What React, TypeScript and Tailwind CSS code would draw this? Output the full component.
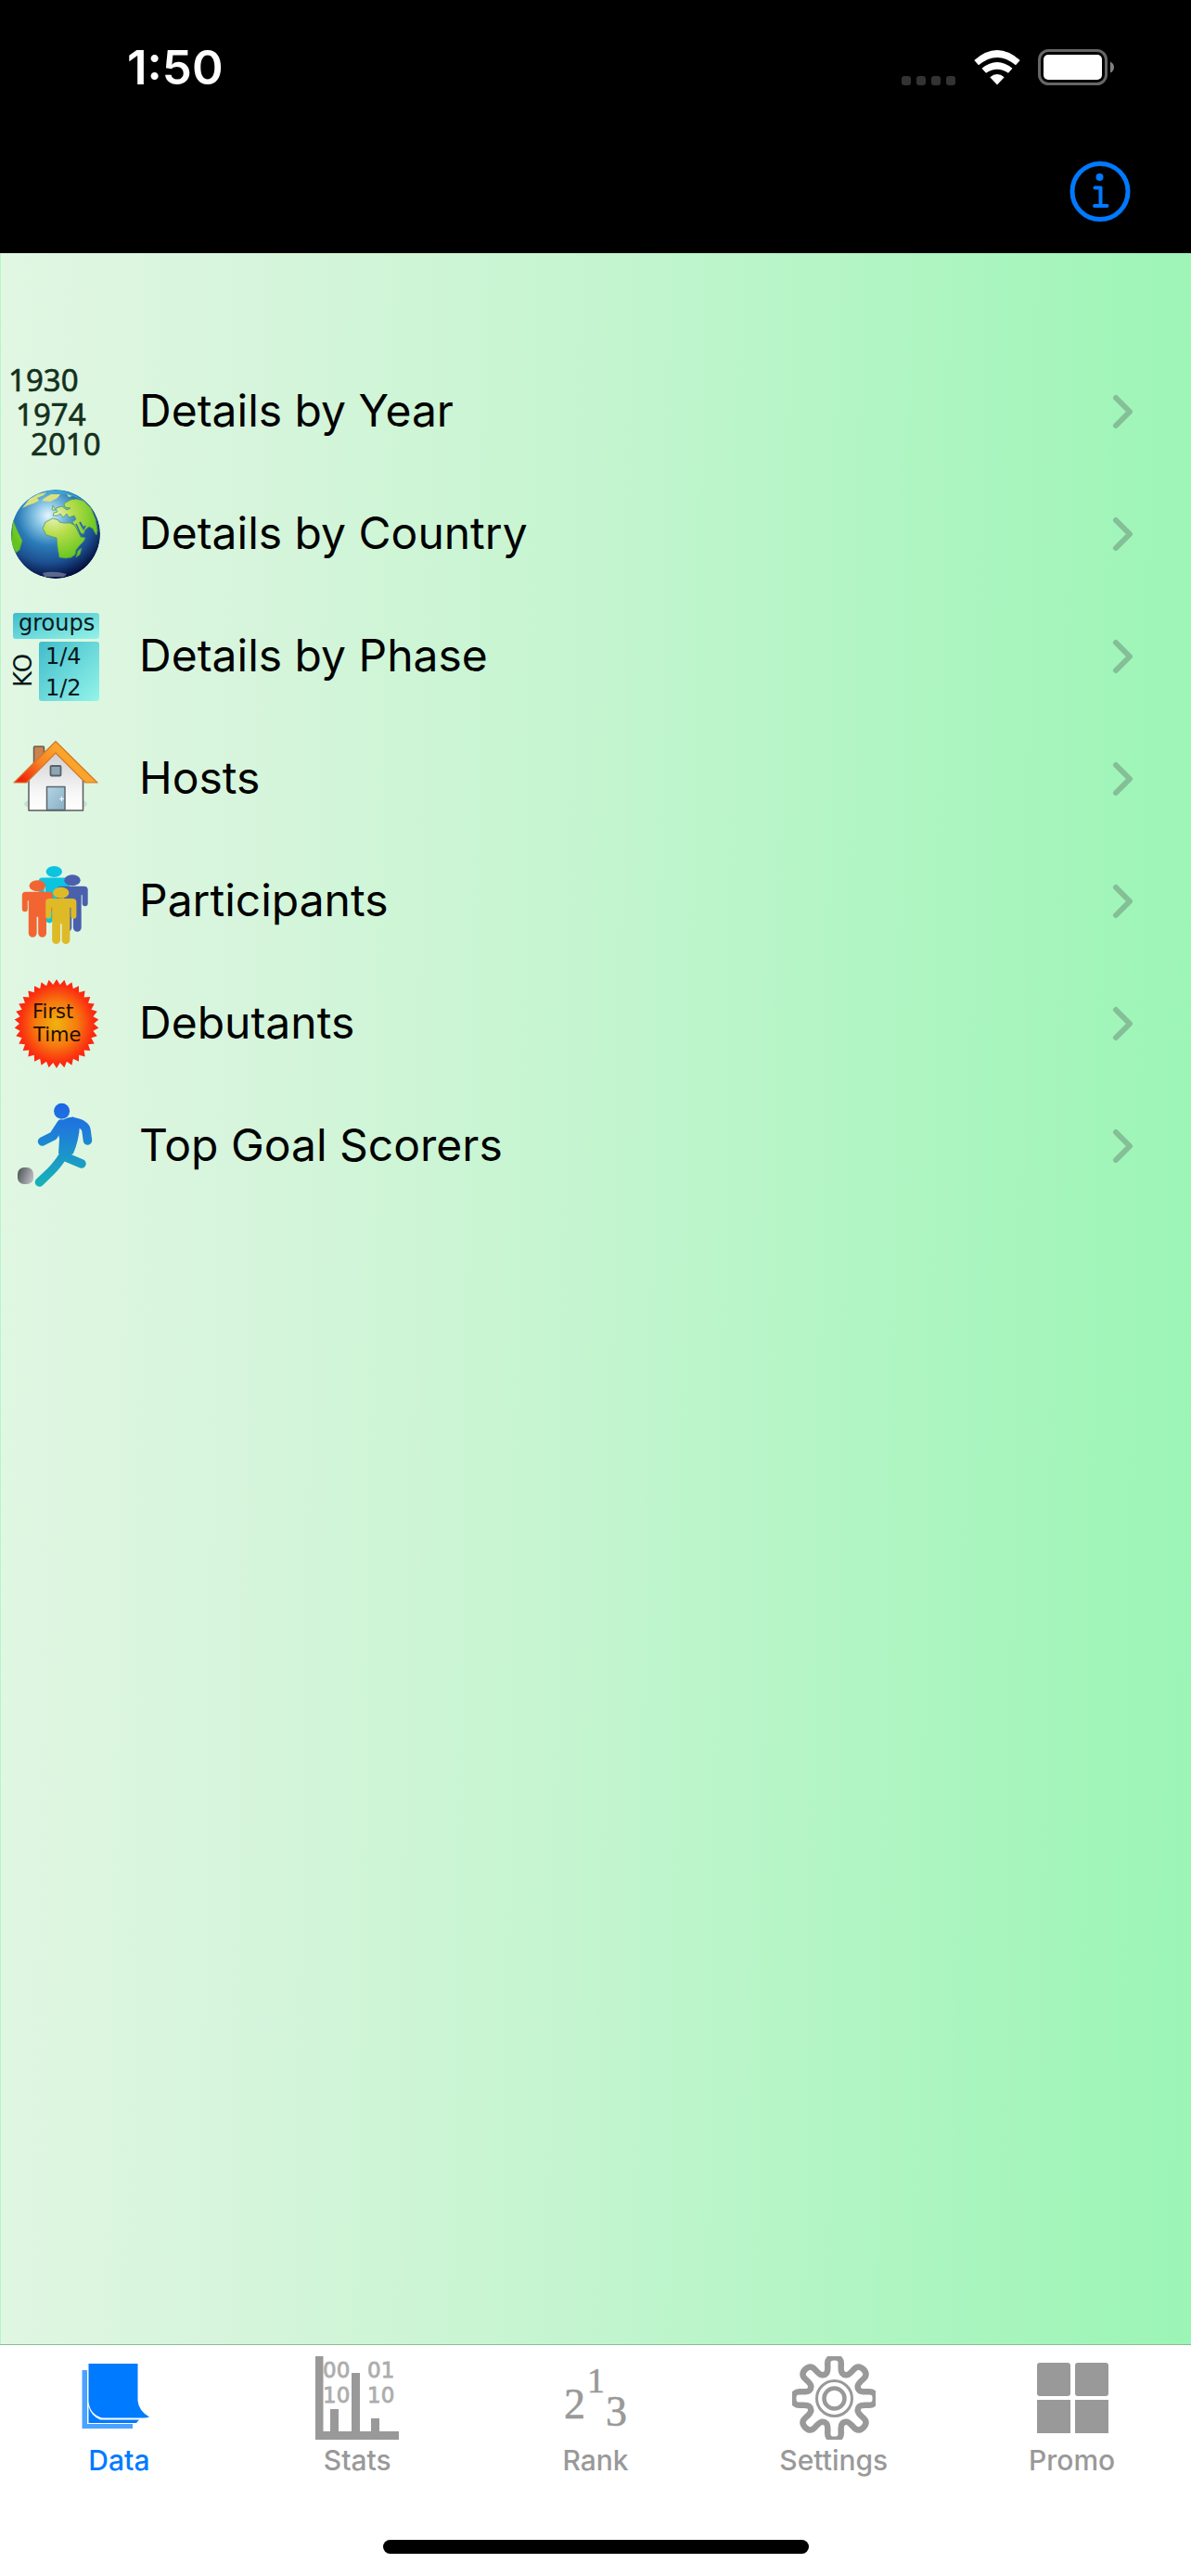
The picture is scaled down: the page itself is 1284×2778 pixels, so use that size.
import { useState } from 'react';
import type { ReactNode } from 'react';

function YearsIcon() {
  return (
    <g fontFamily="'Noto Sans', 'Open Sans', sans-serif" fontSize="33" fill="#13301c" stroke="#13301c" strokeWidth="0.6">
      <text x="-3" y="26">1930</text>
      <text x="5" y="63">1974</text>
      <text x="21" y="95">2010</text>
    </g>
  );
}

function GlobeIcon() {
  return (
    <g>
      <defs>
        <radialGradient id="ocean" cx="40" cy="28" r="68" gradientUnits="userSpaceOnUse">
          <stop offset="0" stopColor="#e6f6fd" />
          <stop offset="0.2" stopColor="#8cc8e6" />
          <stop offset="0.48" stopColor="#2a7cb8" />
          <stop offset="0.75" stopColor="#1c4f90" />
          <stop offset="1" stopColor="#04103f" />
        </radialGradient>
        <radialGradient id="land" cx="46" cy="28" r="50" gradientUnits="userSpaceOnUse">
          <stop offset="0" stopColor="#eef3c0" />
          <stop offset="0.4" stopColor="#b9de4e" />
          <stop offset="1" stopColor="#62c41c" />
        </radialGradient>
        <clipPath id="disc">
          <circle cx="48" cy="48" r="48" />
        </clipPath>
      </defs>
      <g clipPath="url(#disc)">
        <circle cx="48" cy="48" r="48" fill="url(#ocean)" />
        <path d="M8 20Q48 -18 88 20Q70 4 48 4T8 20" fill="#38b4dc" opacity="0.7" />
        <g fill="url(#land)" stroke="#4f9a5e" strokeWidth="0.8" strokeLinejoin="round">
          <path d="M34 42L37 35L45 31L51 33L52 35L57 36L64 36L69 39L72 45L75 51L80 52L78 56L74 60L70 65L69 70L65 73L59 74L52 73L50 62L49 52L45 51L38 49Z" />
          <path d="M45 28L46 25L50 24L48 20L55 18L60 22L64 20L58 19L57 15L64 11L70 10L78 12L86 20L91 32L93 44L92 49L90 46L88 42L84 40L80 43L78 48L73 46L69 39L66 35L70 32L68 28L62 30L60 26L56 30L53 26L50 28Z" />
          <path d="M2 33L7 45L12 55L9 65L5 68L0 58Z" />
          <path d="M72 66L76 63L74 70L70 73Z" />
          <path d="M44 22L45 17L48 22Z" />
        </g>
        <g fill="#d9e27e">
          <path d="M33 12L36 9L43 5L53 5L50 9L42 13Z" />
          <path d="M12 20L20 10L29 5L38 3L35 6L28 9L30 12L24 15L18 17Z" />
          <path d="M60 5L66 7L62 8Z" />
        </g>
        <path d="M70 37L75 48" stroke="#2b6aa8" strokeWidth="1.5" />
        <path d="M74 35L78 42L80 39" stroke="#2b6aa8" strokeWidth="2" fill="none" />
        <path d="M34 90Q46 87 60 91L57 94H36Z" fill="#7f86a8" opacity="0.7" />
      </g>
    </g>
  );
}

function PhasesIcon() {
  return (
    <g fontFamily="'DejaVu Sans', sans-serif" fontSize="24" fill="#06181a">
      <defs>
        <linearGradient id="aqua" x1="0" y1="0" x2="1" y2="1">
          <stop offset="0" stopColor="#41bccb" />
          <stop offset="1" stopColor="#93f4e9" />
        </linearGradient>
      </defs>
      <rect x="2" y="1" width="93" height="28" rx="3" fill="url(#aqua)" />
      <rect x="30" y="32" width="65" height="64" rx="3" fill="url(#aqua)" />
      <text x="8" y="20">groups</text>
      <text x="37" y="56">1/4</text>
      <text x="37" y="90">1/2</text>
      <text transform="translate(22 81) rotate(-90)" fontSize="26">KO</text>
    </g>
  );
}

function HouseIcon() {
  return (
    <g strokeLinejoin="round">
      <defs>
        <linearGradient id="roof" x1="5" y1="52" x2="48" y2="14" gradientUnits="userSpaceOnUse">
          <stop offset="0.1" stopColor="#f3200c" />
          <stop offset="0.6" stopColor="#f98324" />
          <stop offset="1" stopColor="#fba42c" />
        </linearGradient>
        <linearGradient id="wall" x1="0" y1="0" x2="0" y2="1">
          <stop offset="0" stopColor="#cfcfd2" />
          <stop offset="0.7" stopColor="#f7f7f8" />
          <stop offset="1" stopColor="#ffffff" />
        </linearGradient>
        <linearGradient id="door" x1="0" y1="0" x2="1" y2="1">
          <stop offset="0" stopColor="#b4d4e6" />
          <stop offset="1" stopColor="#88afc4" />
        </linearGradient>
      </defs>
      <ellipse cx="48" cy="75" rx="34" ry="8" fill="#9db5a2" opacity="0.35" />
      <rect x="24.5" y="13" width="11" height="24" rx="1" fill="#c98250" stroke="#6d5a4c" strokeWidth="1.5" />
      <path d="M19 82V48L48 19L77.500 48V82Z" fill="url(#wall)" stroke="#5b5b5e" strokeWidth="1.5" />
      <path d="M48 7.500L93 52H80L48 20L16.500 52H3Z" fill="url(#roof)" stroke="#d07a2a" strokeWidth="1.2" />
      <rect x="42.500" y="34" width="11" height="10.500" rx="1" fill="#8fa6b2" stroke="#55626a" strokeWidth="1.8" />
      <rect x="38.500" y="56.500" width="19.500" height="25" fill="url(#door)" stroke="#5d666c" strokeWidth="1.5" />
      <path d="M54.500 67v5M52 69.500h5" stroke="#eef8ff" strokeWidth="1.2" />
    </g>
  );
}

const people = [
  { x: 46.3, y: 16, color: '#0cc4e0' },
  { x: 66, y: 25.3, color: '#4a60ad' },
  { x: 28.3, y: 31.3, color: '#f26533' },
  { x: 53.7, y: 38.7, color: '#deba27' },
];

function PeopleIcon() {
  return (
    <g>
      {people.map((p) => (
        <g key={p.color} transform={`translate(${p.x} ${p.y})`} fill={p.color}>
          <ellipse rx="8.700" ry="6" />
          <path d="M-12.500 6.400H12.500Q16.700 6.400 16.700 10.500V25a3 3 0 0 1-6 0V16h-1V51a3.500 3.500 0 0 1-8.800 0V33.500h-1.600V51a3.500 3.500 0 0 1-8.800 0V16h-1V25a3 3 0 0 1-6 0V10.500Q-16.700 6.400-12.500 6.400Z" />
        </g>
      ))}
    </g>
  );
}

const TEETH = 34;
const burst = Array.from({ length: TEETH * 2 }, (_, i) => {
  const a = (i * Math.PI) / TEETH - Math.PI / 2;
  const k = i % 2 === 0 ? 1 : 0.88;
  return `${(49 + Math.cos(a) * 45.5 * k).toFixed(2)},${(48 + Math.sin(a) * 48 * k).toFixed(2)}`;
}).join(' ');

function BurstIcon() {
  return (
    <g fontFamily="'DejaVu Sans', sans-serif" fontSize="21" fill="#1c0d02">
      <defs>
        <radialGradient id="burst">
          <stop offset="0" stopColor="#f0b40e" />
          <stop offset="0.5" stopColor="#f67a0f" />
          <stop offset="0.88" stopColor="#fb2c10" />
          <stop offset="1" stopColor="#ff2410" />
        </radialGradient>
      </defs>
      <polygon points={burst} fill="url(#burst)" />
      <text x="23" y="42">First</text>
      <text x="24" y="67">Time</text>
    </g>
  );
}

function StrikerIcon() {
  return (
    <g>
      <defs>
        <linearGradient id="kit" x1="0" y1="2" x2="0" y2="92" gradientUnits="userSpaceOnUse">
          <stop offset="0" stopColor="#1d66e6" />
          <stop offset="0.3" stopColor="#1f7adb" />
          <stop offset="1" stopColor="#17b4b6" />
        </linearGradient>
        <linearGradient id="ball" x1="0" y1="0" x2="1" y2="0.400">
          <stop offset="0" stopColor="#474f4d" />
          <stop offset="1" stopColor="#b4b4bb" />
        </linearGradient>
      </defs>
      <circle cx="54.600" cy="10.300" r="8.500" fill="url(#kit)" />
      <path d="M49 25Q56 17 67 16.500L74 26Q73 42 67 56L60 60L51 56L52 40Z" fill="url(#kit)" />
      <g fill="none" stroke="url(#kit)" strokeWidth="9.500" strokeLinecap="round" strokeLinejoin="round">
        <path d="M54 24L45.500 37L33.500 43" />
        <path d="M66 21.500Q80 24 81 31L82.500 42" />
        <path d="M57 57Q50 68 43 75L30.500 87" />
        <path d="M57 59L76 67" />
      </g>
      <rect x="7" y="71" width="17" height="18" rx="7" fill="url(#ball)" />
    </g>
  );
}

function DataIcon() {
  return (
    <g fill="currentColor">
      <path d="M5.500 15H11V73H60V78H5.500Z" opacity="0.7" />
      <path d="M12.500 54Q15 64 25 68.500H67L64 72H12.500Z" />
      <path d="M12.500 8H65.500V48Q66.500 59 78 65.500Q75 66.500 72 66.500H27Q13 62 12.500 48Z" />
    </g>
  );
}

function StatsIcon() {
  return (
    <g fill="currentColor">
      <path d="M0 0H8.500V81H16V57H25V81H39V18H48V81H60V67H69V81H90V90H0Z" />
      <g fontFamily="'DejaVu Sans', sans-serif" fontSize="23" stroke="currentColor" strokeWidth="0.8" opacity="0.8">
        <text x="8" y="23">00</text>
        <text x="56" y="23">01</text>
        <text x="8" y="50">10</text>
        <text x="56" y="50">10</text>
      </g>
    </g>
  );
}

function RankIcon() {
  return (
    <g fill="currentColor" stroke="currentColor" strokeWidth="0.600" fontFamily="'Liberation Serif', serif">
      <text x="11" y="67" fontSize="46">2</text>
      <text x="36" y="39" fontSize="38">1</text>
      <text x="56" y="75" fontSize="46">3</text>
    </g>
  );
}

// Each tooth is five [angle, radius] points, smoothed through their midpoints
const toothShape = [[-10, 45], [10, 45], [13, 30], [22.5, 27], [32, 30]];
const gearPoints = Array.from({ length: 8 }, (_, t) =>
  toothShape.map(([deg, r]) => {
    const a = ((t * 45 + deg - 90) * Math.PI) / 180;
    return [45.5 + Math.cos(a) * r, 45.5 + Math.sin(a) * r];
  }),
).flat();
const gearPath =
  gearPoints
    .map(([x, y], i) => {
      const [nx, ny] = gearPoints[(i + 1) % gearPoints.length];
      const mid = `${((x + nx) / 2).toFixed(2)} ${((y + ny) / 2).toFixed(2)}`;
      return i === 0 ? `M${mid}` : `Q${x.toFixed(2)} ${y.toFixed(2)} ${mid}`;
    })
    .join('') +
  `Q${gearPoints[0][0].toFixed(2)} ${gearPoints[0][1].toFixed(2)} ${((gearPoints[0][0] + gearPoints[1][0]) / 2).toFixed(2)} ${((gearPoints[0][1] + gearPoints[1][1]) / 2).toFixed(2)}Z`;

function GearIcon() {
  return (
    <g fill="none" stroke="currentColor">
      <path d={gearPath} strokeWidth="6.500" />
      <circle cx="45.500" cy="45.500" r="19" strokeWidth="3" />
      <circle cx="45.500" cy="45.500" r="11" strokeWidth="4.500" />
    </g>
  );
}

function PromoIcon() {
  return (
    <g fill="currentColor">
      <rect x="7" y="7" width="36" height="36" rx="3" />
      <rect x="48" y="7" width="36" height="36" rx="3" />
      <rect x="7" y="47" width="36" height="36" />
      <rect x="48" y="47" width="36" height="36" />
    </g>
  );
}

const rows: { label: string; icon: ReactNode }[] = [
  { label: 'Details by Year', icon: <YearsIcon /> },
  { label: 'Details by Country', icon: <GlobeIcon /> },
  { label: 'Details by Phase', icon: <PhasesIcon /> },
  { label: 'Hosts', icon: <HouseIcon /> },
  { label: 'Participants', icon: <PeopleIcon /> },
  { label: 'Debutants', icon: <BurstIcon /> },
  { label: 'Top Goal Scorers', icon: <StrikerIcon /> },
];

const tabs: { label: string; icon: ReactNode }[] = [
  { label: 'Data', icon: <DataIcon /> },
  { label: 'Stats', icon: <StatsIcon /> },
  { label: 'Rank', icon: <RankIcon /> },
  { label: 'Settings', icon: <GearIcon /> },
  { label: 'Promo', icon: <PromoIcon /> },
];

function StatusBar() {
  return (
    <div className="flex h-[141px] items-center justify-between pt-1 pr-[82px] pl-[137px]">
      <span className="text-[51px] leading-[60px] font-semibold text-white">1:50</span>
      <div className="flex items-center">
        <div className="mt-7 flex gap-1.5">
          {[0, 1, 2, 3].map((dot) => (
            <span key={dot} className="size-2.5 rounded-[3px] bg-[#333333]" />
          ))}
        </div>
        <svg className="ml-5 h-[38px] w-[50px]" viewBox="0 0 50 38" fill="#ffffff">
          <path d="M.3 11Q25-11 49.700 11L45 16.300Q25-.5 5 16.300Z" />
          <path d="M8.500 19.700Q25 6.300 41.500 19.700L37 24.700Q25 16.700 13 24.700Z" />
          <path d="M17.300 29.300Q25 22.700 32.700 29.300L25 37.500Z" />
        </svg>
        <svg className="ml-[19px] h-[39px] w-[83px]" viewBox="0 0 83 39">
          <rect x="1.500" y="1.500" width="72" height="36" rx="10" fill="none" stroke="#666666" strokeWidth="3" />
          <rect x="6" y="6" width="63" height="27" rx="5" fill="#ffffff" />
          <path d="M78 13.500Q82 15.500 82 19.500T78 25.500Z" fill="#808080" />
        </svg>
      </div>
    </div>
  );
}

export default function App() {
  const [activeTab, setActiveTab] = useState('Data');

  return (
    <div className="flex min-h-screen flex-col bg-white font-['Inter',sans-serif]">
      <header className="bg-black">
        <StatusBar />
        <div className="flex h-[132px] items-center justify-end pr-[65px]">
          <button type="button" aria-label="Info" className="cursor-pointer text-[#007aff]">
            <svg className="size-[66px]" viewBox="0 0 66 66" fill="none" stroke="currentColor" strokeLinecap="round" strokeLinejoin="round">
              <circle cx="33" cy="32.500" r="30" strokeWidth="5" />
              <circle cx="32.500" cy="17" r="4" fill="currentColor" stroke="none" />
              <path d="M27.500 28.500H33.500V48M27 48H40.500" strokeWidth="4" />
            </svg>
          </button>
        </div>
      </header>

      <main className="flex-1 border-l border-[#b6f5c8] bg-[linear-gradient(91deg,#e1f7e3_0%,#d8f5dd_18%,#c5f5d0_48%,#adf5c1_77%,#9bf5b5_100%)] pt-[105px]">
        <nav>
          {rows.map((row) => (
            <a key={row.label} href="#" className="flex h-[132px] items-center pr-[61px] pl-[11px]">
              <svg className="size-24 shrink-0 overflow-visible" viewBox="0 0 96 96">
                {row.icon}
              </svg>
              <span className="ml-[42px] flex-1 pb-0.5 text-[48px] leading-[60px] text-black">{row.label}</span>
              <svg className="h-[38px] w-6" viewBox="0 0 24 38" fill="none" stroke="#84bf98" strokeWidth="6" strokeLinecap="round" strokeLinejoin="round">
                <path d="M4 4L19 19L4 34" />
              </svg>
            </a>
          ))}
        </nav>
      </main>

      <footer className="border-t border-[#8fb99a] bg-white pb-6">
        <nav className="grid grid-cols-5 pt-3">
          {tabs.map((tab) => (
            <button
              key={tab.label}
              type="button"
              onClick={() => setActiveTab(tab.label)}
              className={`flex cursor-pointer flex-col items-center gap-1 ${activeTab === tab.label ? 'text-[#007aff]' : 'text-[#999999]'}`}
            >
              <svg className="size-[90px]" viewBox="0 0 90 90">
                {tab.icon}
              </svg>
              <span className="text-[30px] leading-9 font-medium">{tab.label}</span>
            </button>
          ))}
        </nav>
        <div className="mx-auto mt-[68px] h-[15px] w-[459px] rounded-full bg-black" />
      </footer>
    </div>
  );
}
